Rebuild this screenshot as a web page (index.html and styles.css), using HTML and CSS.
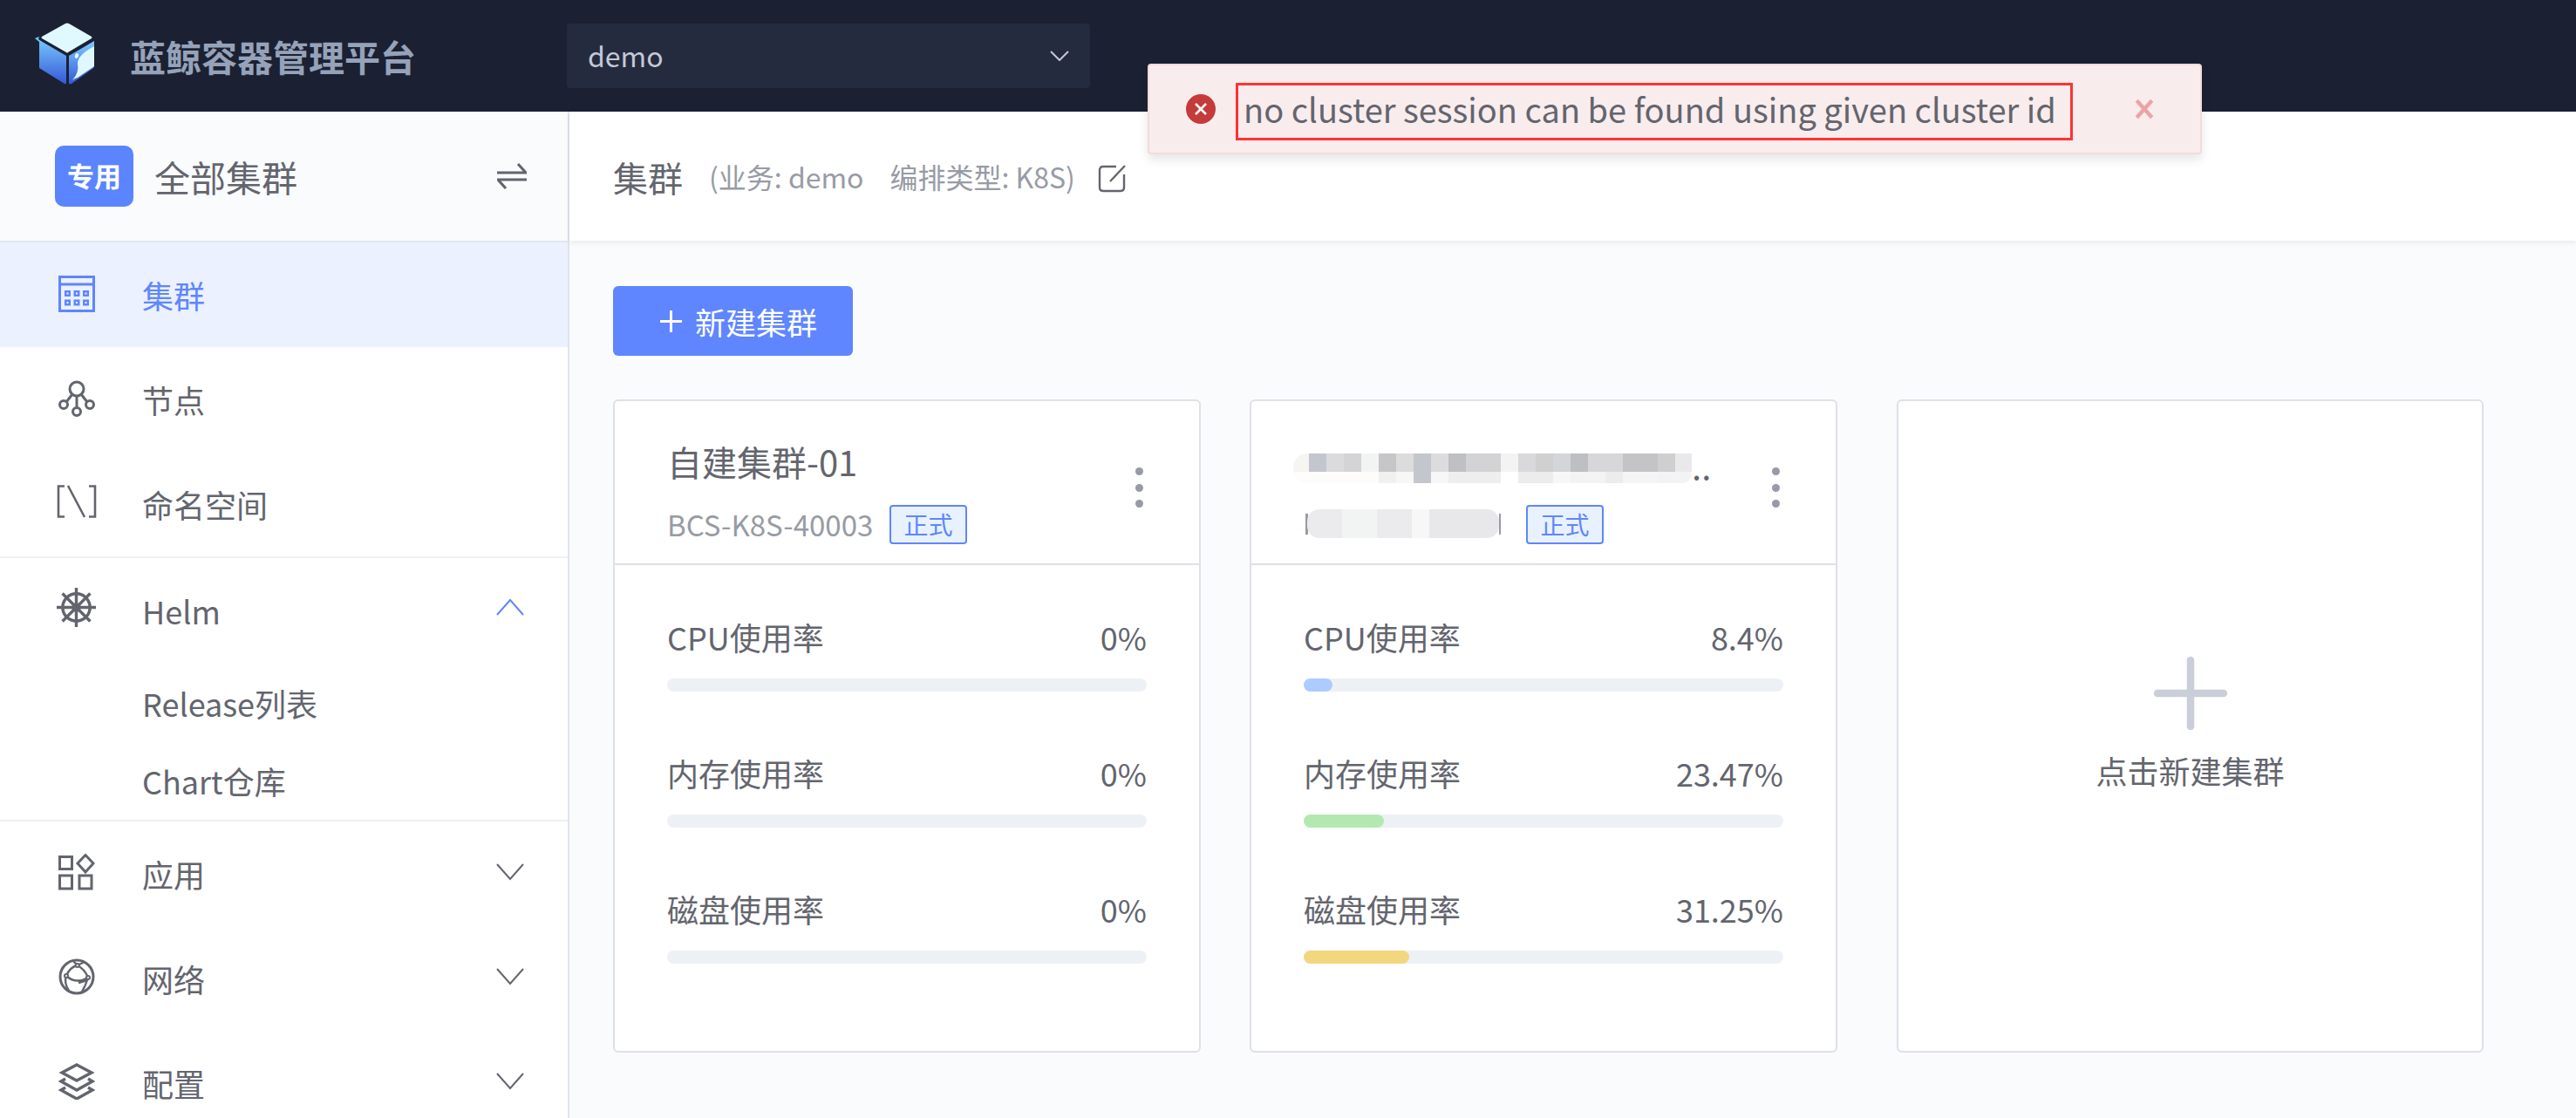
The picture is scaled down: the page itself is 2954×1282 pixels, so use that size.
FILE: index.html
```html
<!DOCTYPE html>
<html lang="zh-CN">
<head>
<meta charset="UTF-8">
<title>蓝鲸容器管理平台</title>
<link rel="stylesheet" href="styles.css">
</head>
<body>
  <header class="header">
    <div class="brand">
      <svg class="logo" viewBox="0 0 72 74" width="72" height="74">
        <defs>
          <linearGradient id="cubeLeft" x1="0" y1="0" x2="0" y2="1">
            <stop offset="0" stop-color="#7bcdff"/>
            <stop offset="1" stop-color="#3657d6"/>
          </linearGradient>
        </defs>
        <path d="M9 15 L36 0 Q38 -1 40 0 L66 15 Q67 16 66 17 L39 33 Q38 34 37 33 L9 17 Q8 16 9 15Z" fill="#e0f9ff"/>
        <path d="M5 18 L6 15 L1 17 L6 21 L6 51 L35 69 Q37 70 37 68 L37 37 L8 20Z" fill="url(#cubeLeft)"/>
        <path d="M40 37 L69 20 L69 49 Q69 50 68 51 L43 69 Q40 70 40 68Z" fill="url(#cubeLeft)"/>
        <path d="M69 26 L69 49 L50 62 Q46 63 44 65 Q52 56 50 46 Q50 36 69 26Z" fill="#dff7ff"/>
        <ellipse cx="49" cy="37" rx="2" ry="3" fill="#eafbff" transform="rotate(20 49 37)"/>
      </svg>
      <span class="brand-name">蓝鲸容器管理平台</span>
    </div>
    <div class="project-select">
      <span class="project-name">demo</span>
      <svg viewBox="0 0 22 12" width="22" height="12"><path d="M1 1 L11 11 L21 1" fill="none" stroke="#c4c9d6" stroke-width="2"/></svg>
    </div>
  </header>

  <div class="message">
    <svg class="message-icon" viewBox="0 0 34 34" width="34" height="34">
      <circle cx="17" cy="17" r="17" fill="#c53a3a"/>
      <path d="M11 11 L23 23 M23 11 L11 23" stroke="#fff" stroke-width="2.6"/>
    </svg>
    <div class="message-text">no cluster session can be found using given cluster id</div>
    <svg class="message-close" viewBox="0 0 22 22" width="24" height="24">
      <path d="M3 2 L19 20 M19 2 L3 20" stroke="#eba4a4" stroke-width="4"/>
    </svg>
  </div>

  <div class="layout">
    <aside class="sidebar">
      <div class="scope">
        <span class="scope-badge">专用</span>
        <span class="scope-name">全部集群</span>
        <svg class="scope-switch" viewBox="0 0 34 30" width="34" height="30">
          <path d="M0 11 H33 L24 1 M34 19 H1 L10 29" fill="none" stroke="#63656e" stroke-width="3"/>
        </svg>
      </div>

      <nav class="menu">
        <a class="menu-item active">
          <svg class="menu-icon" viewBox="0 0 42 42">
            <rect x="1.5" y="1.5" width="39" height="39" fill="none" stroke="currentColor" stroke-width="3"/>
            <path d="M1.5 10 H40.5" stroke="currentColor" stroke-width="3"/>
            <path d="M7 17h7v7h-7z M17.500 17h7v7h-7z M28 17h7v7h-7z M7 27.500h7v7h-7z M17.500 27.500h7v7h-7z M28 27.500h7v7h-7z" fill="currentColor"/>
            <path d="M9.500 19.500h2v2h-2z M20 19.500h2v2h-2z M30.500 19.500h2v2h-2z M9.500 30h2v2h-2z M20 30h2v2h-2z M30.500 30h2v2h-2z" fill="#ebf1ff"/>
          </svg>
          <span>集群</span>
        </a>
        <a class="menu-item">
          <svg class="menu-icon" viewBox="0 0 42 42" fill="none" stroke="currentColor" stroke-width="3">
            <ellipse cx="21" cy="10" rx="8" ry="8"/>
            <circle cx="6" cy="28" r="4.500"/>
            <circle cx="36" cy="28" r="4.500"/>
            <circle cx="21" cy="36" r="4.500"/>
            <path d="M21 18 V31 M16 16 L9 25 M26 16 L33 25"/>
          </svg>
          <span>节点</span>
        </a>
        <a class="menu-item">
          <svg class="menu-icon icon-namespace" viewBox="0 0 46 38" fill="none" stroke="currentColor" stroke-width="2.600">
            <path d="M9 1.500 H2 V36.500 H9 M37 1.500 H44 V36.500 H37 M13 1 L32 37"/>
          </svg>
          <span>命名空间</span>
        </a>

        <div class="menu-group">
          <a class="menu-item">
            <svg class="menu-icon icon-helm" viewBox="0 0 48 48" fill="none" stroke="currentColor" stroke-width="3.500">
              <circle cx="24" cy="24" r="16"/>
              <circle cx="24" cy="24" r="3.500"/>
              <path d="M24 1 V47 M1 24 H47 M7.700 7.700 L40.300 40.300 M40.300 7.700 L7.700 40.300"/>
            </svg>
            <span>Helm</span>
            <svg class="chevron up" viewBox="0 0 32 20"><path d="M1 19 L16 2 L31 19" fill="none" stroke="currentColor" stroke-width="2"/></svg>
          </a>
          <a class="submenu-item">Release列表</a>
          <a class="submenu-item">Chart仓库</a>
        </div>

        <div class="menu-group lower">
          <a class="menu-item">
            <svg class="menu-icon" viewBox="0 0 42 42" fill="none" stroke="currentColor" stroke-width="3">
              <rect x="1.500" y="3.500" width="14" height="14"/>
              <rect x="1.500" y="25" width="14" height="15"/>
              <rect x="24" y="25" width="14" height="15"/>
              <path d="M31 1.500 L40 11 L31 21 L22 11Z"/>
            </svg>
            <span>应用</span>
            <svg class="chevron" viewBox="0 0 32 20"><path d="M1 1 L16 18 L31 1" fill="none" stroke="currentColor" stroke-width="2"/></svg>
          </a>
          <a class="menu-item">
            <svg class="menu-icon" viewBox="0 0 42 42" fill="none" stroke="currentColor" stroke-width="3">
              <circle cx="21" cy="21" r="19"/>
              <path d="M9 20 Q13 10 21.700 8 Q30 12 34 22 Q20 30 9 20 Q6 28 12 37 M34 22 Q31 32 26 40 M21.700 8 L17 3 M21.700 8 L30 4 M23 28 L33 25" stroke-width="2.400"/>
              <circle cx="21.700" cy="8" r="2" fill="#fff" stroke-width="2"/>
              <circle cx="9" cy="20" r="2" fill="#fff" stroke-width="2"/>
              <circle cx="34" cy="22" r="2" fill="#fff" stroke-width="2"/>
            </svg>
            <span>网络</span>
            <svg class="chevron" viewBox="0 0 32 20"><path d="M1 1 L16 18 L31 1" fill="none" stroke="currentColor" stroke-width="2"/></svg>
          </a>
          <a class="menu-item">
            <svg class="menu-icon" viewBox="0 0 42 42" fill="none" stroke="currentColor" stroke-width="3.400">
              <path d="M21 2 L38 11 L21 20 L4 11Z"/>
              <path d="M8 18 L3 21 L21 31 L39 21 L34 18"/>
              <path d="M8 28 L3 31 L21 41 L39 31 L34 28"/>
            </svg>
            <span>配置</span>
            <svg class="chevron" viewBox="0 0 32 20"><path d="M1 1 L16 18 L31 1" fill="none" stroke="currentColor" stroke-width="2"/></svg>
          </a>
        </div>
      </nav>
    </aside>

    <main class="content">
      <div class="topbar">
        <h1 class="page-title">集群</h1>
        <span class="page-info">(业务: demo</span>
        <span class="page-info second">编排类型: K8S)</span>
        <svg class="edit-icon" viewBox="0 0 32 32" fill="none" stroke="#63656e" stroke-width="2.400">
          <path d="M21 2 H6 Q2 2 2 6 V26 Q2 30 6 30 H26 Q30 30 30 26 V11"/>
          <path d="M31 1 L14 19"/>
        </svg>
      </div>

      <div class="page-body">
        <button class="btn-create"><span class="btn-plus"></span>新建集群</button>

        <div class="cards">
          <section class="card">
            <div class="card-head">
              <div class="card-title">自建集群-01</div>
              <div class="card-sub">
                <span class="card-id">BCS-K8S-40003</span>
                <span class="tag">正式</span>
              </div>
              <div class="dots"><i></i><i></i><i></i></div>
            </div>
            <div class="card-body">
              <div class="metric">
                <div class="metric-row"><span>CPU使用率</span><span>0%</span></div>
                <div class="bar"></div>
              </div>
              <div class="metric">
                <div class="metric-row"><span>内存使用率</span><span>0%</span></div>
                <div class="bar"></div>
              </div>
              <div class="metric">
                <div class="metric-row"><span>磁盘使用率</span><span>0%</span></div>
                <div class="bar"></div>
              </div>
            </div>
          </section>

          <section class="card">
            <div class="card-head">
              <div class="card-title hidden-title">...</div>
              <div class="mosaic-title"></div>
              <div class="card-sub">
                <span class="card-id hidden-id"><span class="mosaic-id"></span></span>
                <span class="tag">正式</span>
              </div>
              <div class="dots"><i></i><i></i><i></i></div>
            </div>
            <div class="card-body">
              <div class="metric">
                <div class="metric-row"><span>CPU使用率</span><span>8.4%</span></div>
                <div class="bar"><div class="bar-fill blue" style="width: 6%"></div></div>
              </div>
              <div class="metric">
                <div class="metric-row"><span>内存使用率</span><span>23.47%</span></div>
                <div class="bar"><div class="bar-fill green" style="width: 16.7%"></div></div>
              </div>
              <div class="metric">
                <div class="metric-row"><span>磁盘使用率</span><span>31.25%</span></div>
                <div class="bar"><div class="bar-fill yellow" style="width: 22%"></div></div>
              </div>
            </div>
          </section>

          <section class="card card-add">
            <svg class="add-plus" viewBox="0 0 84 84" width="84" height="84">
              <path d="M42 4 V80 M4 42 H80" stroke="#c9ced9" stroke-width="8.500" stroke-linecap="round"/>
            </svg>
            <div class="add-text">点击新建集群</div>
          </section>
        </div>
      </div>
    </main>
  </div>
</body>
</html>
```

FILE: styles.css
```css
* {
  box-sizing: border-box;
}

html,
body {
  margin: 0;
  height: 100%;
  overflow: hidden;
}

body {
  position: relative;
  font-family: "Noto Sans CJK SC", "Noto Sans", sans-serif;
  color: #63656e;
  background-color: #fafbfd;
}

svg {
  display: block;
  flex: none;
}

/* header */
.header {
  display: flex;
  align-items: center;
  height: 128px;
  background-color: #1b2133;
}

.brand {
  display: flex;
  align-items: center;
  width: 650px;
  padding-left: 39px;
}

.logo {
  margin-right: 38px;
  overflow: visible;
}

.brand-name {
  font-size: 41px;
  font-weight: 700;
  color: #96a2b9;
}

.project-select {
  display: flex;
  align-items: center;
  justify-content: space-between;
  width: 600px;
  height: 74px;
  margin-top: -1px;
  padding: 0 24px;
  border-radius: 4px;
  background-color: #252b3f;
  font-size: 32px;
  color: #c4c9d6;
}

.project-name {
  margin-top: -2px;
}

/* message */
.message {
  position: absolute;
  top: 73px;
  left: 1316px;
  z-index: 10;
  display: flex;
  align-items: center;
  width: 1209px;
  height: 104px;
  padding-left: 42px;
  border: 2px solid #f5dada;
  border-radius: 4px;
  background-color: #f9eced;
  box-shadow: 0 6px 12px rgba(0, 0, 0, 0.1);
}

.message-text {
  display: flex;
  align-items: center;
  width: 960px;
  height: 66px;
  margin: 6px 0 0 23px;
  padding: 0 0 8px 6px;
  border: 3px solid #f33;
  font-size: 38px;
  white-space: nowrap;
}

.message-close {
  margin-left: 70px;
}

/* layout */
.layout {
  display: flex;
  height: 1154px;
}

.sidebar {
  flex: none;
  width: 653px;
  border-right: 2px solid #dde4eb;
  background-color: #fff;
}

.scope {
  display: flex;
  align-items: center;
  height: 150px;
  padding: 0 47px 0 63px;
  border-bottom: 2px solid #e1e6ef;
  background-color: #fafbfd;
}

.scope-badge {
  width: 90px;
  height: 70px;
  border-radius: 10px;
  background-color: #5b84ff;
  font-size: 31px;
  font-weight: 700;
  line-height: 68px;
  text-align: center;
  color: #fff;
}

.scope-name {
  flex: 1;
  margin-left: 24px;
  font-size: 41px;
}

.menu-item {
  display: flex;
  align-items: center;
  height: 120px;
  padding: 0 50px 0 163px;
  position: relative;
  font-size: 36px;
}

.menu-item.active {
  background-color: #ebf1ff;
  color: #5f86ff;
}

.menu-icon {
  position: absolute;
  left: 67px;
  top: 38px;
  width: 42px;
  height: 42px;
}

.menu-group.lower .menu-icon {
  top: 37px;
}

.menu-icon.icon-namespace {
  left: 65px;
  width: 46px;
  height: 38px;
}

.menu-icon.icon-helm {
  left: 64px;
  top: 33px;
  width: 47px;
  height: 47px;
}

.menu-item span {
  flex: 1;
}

.chevron {
  width: 32px;
  height: 20px;
  margin-bottom: 4px;
}

.chevron.up {
  margin-bottom: 8px;
  color: #5f86ff;
}

.menu-group {
  border-top: 2px solid #f0f1f5;
}

.submenu-item {
  display: block;
  height: 89px;
  padding-left: 163px;
  font-size: 36px;
  line-height: 93px;
}

.menu-group .submenu-item:last-child {
  height: 91px;
}

/* page */
.content {
  flex: 1;
  min-width: 0;
}

.topbar {
  display: flex;
  align-items: center;
  height: 148px;
  padding-left: 50px;
  background-color: #fff;
  box-shadow: 0 2px 6px rgba(0, 0, 0, 0.08);
}

.page-title {
  margin: 2px 0 0;
  font-size: 40px;
  font-weight: 400;
}

.page-info {
  margin-left: 30px;
  font-size: 32px;
  color: #979ba5;
}

.page-info.second {
  margin-left: 30px;
}

.edit-icon {
  width: 32px;
  height: 32px;
  margin: 6px 0 0 26px;
}

.page-body {
  padding: 52px 50px 0;
}

.btn-create {
  display: flex;
  align-items: center;
  width: 275px;
  height: 80px;
  padding: 0 0 0 54px;
  border: none;
  border-radius: 6px;
  background-color: #5f86ff;
  font-family: inherit;
  font-size: 35px;
  color: #fff;
}

.btn-plus {
  position: relative;
  width: 25px;
  height: 25px;
  margin-right: 15px;
  background:
    linear-gradient(#fff, #fff) center / 100% 3px no-repeat,
    linear-gradient(#fff, #fff) center / 3px 100% no-repeat;
}

.cards {
  display: flex;
  gap: 56px;
  margin-top: 50px;
}

.card {
  flex: none;
  width: 674px;
  height: 749px;
  border: 2px solid #dfe0e8;
  border-radius: 6px;
  background-color: #fff;
}

.card-head {
  position: relative;
  height: 188px;
  padding: 40px 60px 0;
  border-bottom: 2px solid #dfe0e8;
}

.card-title {
  height: 58px;
  font-size: 40px;
  line-height: 58px;
}

.hidden-title {
  padding-left: 434px;
  line-height: 66px;
}

.mosaic-title {
  position: absolute;
  top: 60px;
  left: 48px;
  width: 457px;
  height: 34px;
  border-radius: 16px 0 10px 16px;
  background:
    linear-gradient(90deg,
      #f7f5f2 0 18px, #c3c6cf 18px 38px, #dbdbdd 38px 58px, #d4d4d6 58px 78px, #f2f3f3 78px 98px,
      #c6c6c8 98px 118px, #dcdcdc 118px 138px, #c3c6cc 138px 158px, #dcdcde 158px 178px, #bfc0c3 178px 198px,
      #d3d3d5 198px 238px, #f3f3f3 238px 258px, #d9d9db 258px 278px, #d0d0d1 278px 298px, #d4d5d8 298px 318px,
      #bebfc2 318px 338px, #d7d7d9 338px 378px, #c4c4c7 378px 418px, #cfcfcf 418px 438px, #e9e9ec 438px 457px)
      top / 100% 21px no-repeat,
    linear-gradient(90deg,
      #fdfcfb 0 98px, #f0f0f0 98px 118px, #f7f7f5 118px 138px, #c3c6cc 138px 158px, #f7f7f7 158px 178px,
      #eeeeee 178px 238px, #fff 238px 258px, #ececec 258px 298px, #f7f7f7 298px 318px, #f3f3f4 318px 358px,
      #ececec 358px 378px, #f5f5f6 378px 418px, #f3f3f5 418px 457px);
}

.card-sub {
  display: flex;
  align-items: center;
  height: 46px;
  margin-top: 20px;
}

.card-id {
  width: 229px;
  font-size: 33px;
  color: #979ba5;
  white-space: nowrap;
}

.hidden-id {
  width: 224px;
  height: 24px;
  margin: 0 3px 0 2px;
  border-left: 3px solid #979ba5;
  border-right: 2px solid #979ba5;
}

.mosaic-id {
  display: block;
  height: 33px;
  margin: -5px 0 0 -1px;
  border-radius: 14px;
  background: linear-gradient(90deg, #ebebed 0 40px, #f2f3f3 40px 80px, #ebebed 80px 120px, #f7f7f7 120px 140px, #e8e8ea 140px 220px);
}

.tag {
  display: block;
  width: 89px;
  height: 45px;
  margin-left: 26px;
  border: 2px solid #5f86ff;
  border-radius: 4px;
  background-color: #e8f2ff;
  font-size: 28px;
  line-height: 40px;
  text-align: center;
  color: #5f86ff;
}

.dots {
  position: absolute;
  top: 76px;
  right: 64px;
  display: flex;
  flex-direction: column;
  gap: 9.5px;
}

.dots i {
  display: block;
  width: 9px;
  height: 9px;
  border-radius: 50%;
  background-color: #979ba5;
}

.card-body {
  padding: 56px 60px 0;
}

.metric {
  height: 156px;
}

.metric-row {
  display: flex;
  justify-content: space-between;
  height: 52px;
  font-size: 36px;
  line-height: 52px;
}

.bar {
  height: 15px;
  margin-top: 22px;
  border-radius: 8px;
  background-color: #edf0f5;
}

.bar-fill {
  height: 100%;
  border-radius: 8px;
}

.bar-fill.blue {
  background-color: #aecbff;
}

.bar-fill.green {
  background-color: #b3e8b3;
}

.bar-fill.yellow {
  background-color: #f3d77e;
}

.card-add {
  display: flex;
  flex-direction: column;
  align-items: center;
  justify-content: center;
  width: 673px;
  margin-left: 12px;
}

.add-plus {
  margin-top: -4px;
}

.add-text {
  margin-top: 20px;
  font-size: 36px;
  line-height: 52px;
}
```
